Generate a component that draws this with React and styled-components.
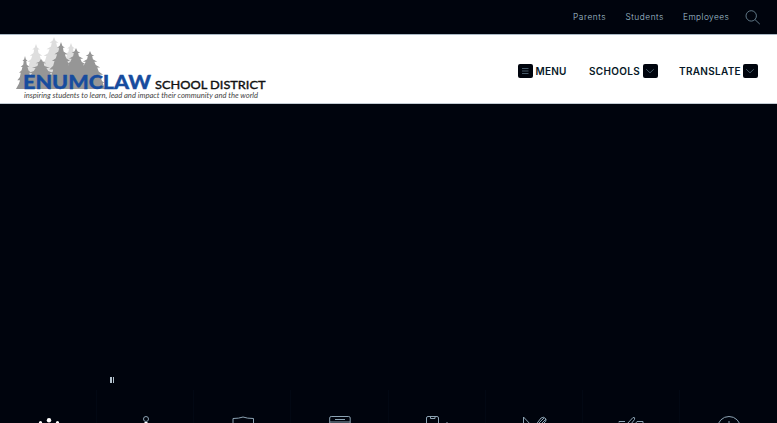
import React from "react";
import styled, { createGlobalStyle } from "styled-components";

const GlobalStyle = createGlobalStyle`
  * {
    box-sizing: border-box;
  }

  body {
    margin: 0;
    overflow: hidden;
    background-color: #00040d;
    font-family: Inter, "Liberation Sans", sans-serif;
  }
`;

const Page = styled.div`
  display: flex;
  flex-direction: column;
  height: 423px;
  overflow: hidden;
  background-color: #00040d;
`;

const TopBar = styled.nav`
  display: flex;
  flex: none;
  justify-content: flex-end;
  align-items: center;
  height: 34px;
  padding-right: 16px;
`;

const TopLink = styled.a`
  width: ${(props) => props.$width}px;
  margin-right: ${(props) => props.$gap}px;
  font-size: 8.3px;
  font-weight: 300;
  line-height: 12px;
  letter-spacing: ${(props) => props.$spacing}px;
  white-space: nowrap;
  color: #a9c6d8;
`;

const SearchButton = styled.a`
  display: flex;
  width: 16px;
  height: 16px;
`;

const Header = styled.header`
  display: flex;
  flex: none;
  justify-content: space-between;
  align-items: center;
  height: 70px;
  padding: 0 19.5px 0 14px;
  border-top: 1px solid #a9b8c4;
  border-bottom: 1px solid #c3ccd4;
  background-color: #fff;
`;

const LogoLink = styled.a`
  display: flex;
`;

const MainNav = styled.nav`
  display: flex;
  align-items: center;
  padding-top: 3px;
`;

const NavItem = styled.div`
  display: flex;
  align-items: center;
  gap: 3px;
  margin-left: ${(props) => props.$gap || 0}px;
`;

const NavLabel = styled.span`
  width: ${(props) => props.$width}px;
  font-size: 10px;
  font-weight: 600;
  line-height: 14px;
  letter-spacing: ${(props) => props.$spacing}px;
  white-space: nowrap;
  color: #071827;
`;

const NavButton = styled.span`
  display: flex;
  justify-content: center;
  align-items: center;
  width: 14.5px;
  height: 14px;
  border-radius: 2px;
  background-color: #00040d;
`;

const Hero = styled.main`
  display: flex;
  flex: none;
  align-items: flex-end;
  height: 286px;
  padding: 0 0 7px 110px;
`;

const PauseButton = styled.span`
  display: flex;
  gap: 1px;

  &::before,
  &::after {
    content: "";
    width: 1.5px;
    height: 6px;
    background-color: #b3c2cd;
  }
`;

const QuickLinks = styled.section`
  display: grid;
  flex: none;
  grid-template-columns: repeat(8, 1fr);
  height: 33px;
`;

const QuickLink = styled.a`
  display: flex;
  justify-content: center;
  padding: 25px 0 0 1px;
  overflow: hidden;
  border-right: 1px solid #020813;

  &:last-child {
    border-right: 0;
  }
`;

const treeShape =
  "M0 0L1 4L3 6L1.5 6L2 10L5 13L3 13L4 17L7 20L5 20L6 25L9 29L6 29L7 35L10 39L-10 39L-7 35L-6 29L-9 29L-6 25L-5 20L-7 20L-4 17L-3 13L-5 13L-2 10L-1.5 6L-3 6L-1 4Z";

const Tree = ({ x, y, sx = 1, sy = 1, fill }) => (
  <path d={treeShape} fill={fill} transform={`translate(${x} ${y}) scale(${sx} ${sy})`} />
);

const Logo = () => (
  <svg width="254" height="68" viewBox="14 35 254 68">
    <Tree x={36} y={44} sx={1.25} sy={0.9} fill="#dedede" />
    <Tree x={54} y={37} sx={1.5} sy={0.95} fill="#dedede" />
    <Tree x={71} y={43} sx={1.3} sy={0.9} fill="#dedede" />
    <Tree x={25} y={56} sx={0.85} sy={0.84} fill="#969696" />
    <Tree x={41} y={59} sx={1.8} sy={0.7} fill="#969696" />
    <Tree x={61} y={42} sx={1.3} sy={0.95} fill="#969696" />
    <Tree x={76} y={48} sx={1.45} sy={0.82} fill="#969696" />
    <Tree x={90} y={51} sx={1.45} sy={0.82} fill="#969696" />
    <path d="M16 89L22 78L33 76L51 75L56 66L83 66L99 73L105 89Z" fill="#969696" />
    <text
      x="23"
      y="88.5"
      fontFamily="Lato"
      fontWeight="900"
      fontSize="18.8"
      fill="#174c9e"
      stroke="#174c9e"
      strokeWidth="0.3"
      textLength="128"
      lengthAdjust="spacingAndGlyphs"
    >
      ENUMCLAW
    </text>
    <text
      x="155"
      y="88.5"
      fontFamily="Lato"
      fontSize="12.3"
      fill="#111"
      stroke="#111"
      strokeWidth="0.4"
      textLength="110.5"
      lengthAdjust="spacingAndGlyphs"
    >
      SCHOOL DISTRICT
    </text>
    <text
      x="24"
      y="97.8"
      fontFamily="Lato"
      fontStyle="italic"
      fontSize="8"
      fill="#444"
      textLength="234"
      lengthAdjust="spacingAndGlyphs"
    >
      inspiring students to learn, lead and impact their community and the world
    </text>
  </svg>
);

const SearchIcon = () => (
  <svg width="16" height="16" fill="none" stroke="#607887" strokeWidth="1">
    <circle cx="6.2" cy="6.9" r="5.2" />
    <path d="M10 10.6L14.8 15.1" />
  </svg>
);

const MenuIcon = () => (
  <svg width="8" height="8" stroke="#587080" strokeWidth="0.8">
    <path d="M1 1.5H7.5M1 4H7.5M1 6.5H7.5" />
  </svg>
);

const ChevronIcon = () => (
  <svg width="10" height="8" fill="none" stroke="#587080" strokeWidth="0.8">
    <path d="M1.2 2.2L5 5.8L8.8 2.2" />
  </svg>
);

const LineIcon = ({ children }) => (
  <svg width="28" height="28" fill="none" stroke="#8ca3b3" strokeWidth="1">
    {children}
  </svg>
);

const quickIcons = [
  <>
    <g fill="#fff" stroke="none">
      <circle cx="14" cy="5.2" r="2.2" />
      <circle cx="5.5" cy="7.5" r="1.6" />
      <circle cx="22.5" cy="7.5" r="1.6" />
    </g>
  </>,
  <>
    <circle cx="14" cy="4" r="2.5" />
    <path d="M12.5 7H15.5V20H12.5Z" fill="#fff" stroke="none" />
  </>,
  <path d="M4 22V3.5Q10 3.5 14 2Q18 3.5 24.5 3.5V22" />,
  <>
    <rect x="3.7" y="1.5" width="20.5" height="24" rx="1.5" />
    <path d="M9 4.5H19M4 7H24" />
  </>,
  <>
    <rect x="3.5" y="1.5" width="12" height="24" rx="1.5" />
    <path d="M7.5 2V3.5H12V2M24 7V12" />
  </>,
  <path d="M3.5 2V10M3.5 2L12 11M15 11L21 3Q24 1 26 4Q27 6 23 9M19 8L24 3M21 9L26 4" />,
  <path d="M2 7.5V6.5H8M10 9L16 2.5Q18.5 2 17.5 4.5L14 9M18 9L20 6.5H26V9" />,
  <>
    <circle cx="14" cy="13" r="11.5" />
    <path d="M14 6V14" />
  </>,
];

const App = () => {
  return (
    <>
      <GlobalStyle />
      <Page>
        <TopBar>
          <TopLink $width={33} $gap={19.5} $spacing={0.6}>Parents</TopLink>
          <TopLink $width={38} $gap={19.5} $spacing={0.55}>Students</TopLink>
          <TopLink $width={46} $gap={16} $spacing={0.45}>Employees</TopLink>
          <SearchButton>
            <SearchIcon />
          </SearchButton>
        </TopBar>
        <Header>
          <LogoLink>
            <Logo />
          </LogoLink>
          <MainNav>
            <NavItem>
              <NavButton>
                <MenuIcon />
              </NavButton>
              <NavLabel $width={32} $spacing={0.25}>MENU</NavLabel>
            </NavItem>
            <NavItem $gap={21.5}>
              <NavLabel $width={51} $spacing={0.3}>SCHOOLS</NavLabel>
              <NavButton>
                <ChevronIcon />
              </NavButton>
            </NavItem>
            <NavItem $gap={21.5}>
              <NavLabel $width={61} $spacing={0.3}>TRANSLATE</NavLabel>
              <NavButton>
                <ChevronIcon />
              </NavButton>
            </NavItem>
          </MainNav>
        </Header>
        <Hero>
          <PauseButton />
        </Hero>
        <QuickLinks>
          {quickIcons.map((icon, index) => (
            <QuickLink key={index}>
              <LineIcon>{icon}</LineIcon>
            </QuickLink>
          ))}
        </QuickLinks>
      </Page>
    </>
  );
};

export default App;
